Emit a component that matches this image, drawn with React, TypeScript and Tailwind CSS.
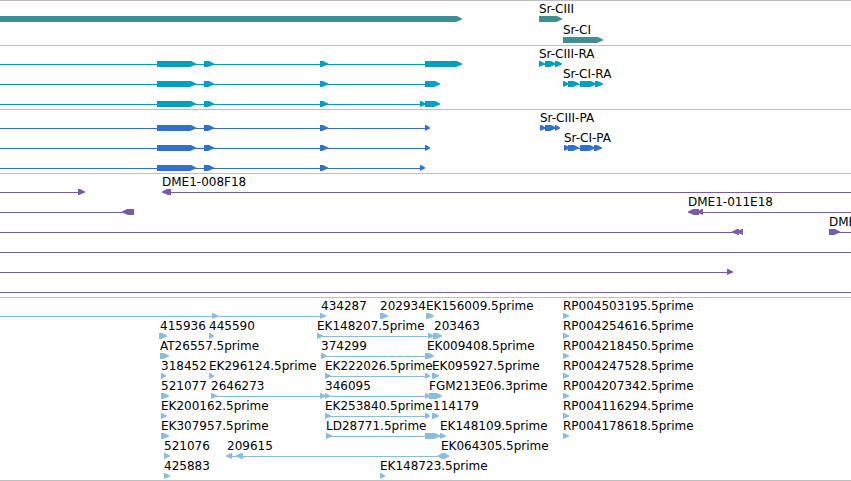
type Dir = 'r' | 'l' | 'both';
type Box = [start: number, end: number, dir?: Dir];
type Label = [x: number, text: string];
type Span = [start: number, end: number];

interface Row {
  labels?: Label[];
  lines?: Span[];
  boxes?: Box[];
}

interface Track {
  name: string;
  color: string;
  spacing: string;
  rows: Row[];
}

// Lines that run past the right edge of the view end here.
const OPEN_END = 4000;

const exons: Box[] = [[157, 196], [204, 214], [320, 328]];

const tracks: Track[] = [
  {
    name: 'Genes',
    color: 'text-[#408d94]',
    spacing: 'gap-px pb-0.5',
    rows: [
      { labels: [[538, 'Sr-CIII']], boxes: [[-10, 462], [539, 562]] },
      { labels: [[562, 'Sr-CI']], boxes: [[563, 603]] },
    ],
  },
  {
    name: 'Transcripts',
    color: 'text-[#009fbf]',
    spacing: 'pb-0.5',
    rows: [
      {
        labels: [[538, 'Sr-CIII-RA']],
        lines: [[0, 460], [539, 561]],
        boxes: [...exons, [425, 462], [539, 545], [545, 556], [555, 562]],
      },
      {
        labels: [[562, 'Sr-CI-RA']],
        lines: [[0, 438], [563, 602]],
        boxes: [...exons, [425, 440], [563, 569], [568, 579], [580, 596], [595, 603]],
      },
      { lines: [[0, 438]], boxes: [...exons, [420, 426], [425, 440]] },
    ],
  },
  {
    name: 'Proteins',
    color: 'text-[#336fcf]',
    spacing: 'pb-0.5',
    rows: [
      {
        labels: [[539, 'Sr-CIII-PA']],
        lines: [[0, 429], [540, 559]],
        boxes: [...exons, [425, 430], [540, 546], [545, 556], [555, 560]],
      },
      {
        labels: [[563, 'Sr-CI-PA']],
        lines: [[0, 429], [564, 600]],
        boxes: [...exons, [425, 430], [564, 570], [568, 579], [580, 595], [594, 602]],
      },
      { lines: [[0, 424]], boxes: [...exons, [420, 425]] },
    ],
  },
  {
    name: 'Clones',
    color: 'text-[#775ba9]',
    spacing: 'pb-0.5',
    rows: [
      {
        labels: [[161, 'DME1-008F18']],
        lines: [[0, 84], [163, OPEN_END]],
        boxes: [[78, 85], [162, 171, 'l']],
      },
      {
        labels: [[687, 'DME1-011E18']],
        lines: [[0, 125], [690, OPEN_END]],
        boxes: [[122, 134, 'l'], [688, 699, 'l'], [697, 703, 'l']],
      },
      {
        labels: [[828, 'DME']],
        lines: [[0, 740], [830, OPEN_END]],
        boxes: [[732, 739, 'l'], [737, 743, 'l'], [829, 840]],
      },
      { lines: [[0, OPEN_END]] },
      { lines: [[0, 732]], boxes: [[727, 733]] },
      { lines: [[0, OPEN_END]] },
    ],
  },
  {
    name: 'ESTs',
    color: 'text-[#89bddf]',
    spacing: 'pb-px',
    rows: [
      {
        labels: [[320, '434287'], [379, '202934'], [425, 'EK156009.5prime'], [562, 'RP004503195.5prime']],
        lines: [[0, 325]],
        boxes: [[212, 218], [320, 326], [380, 388], [426, 434], [563, 569]],
      },
      {
        labels: [[159, '415936'], [208, '445590'], [316, 'EK148207.5prime'], [433, '203463'], [562, 'RP004254616.5prime']],
        lines: [[317, 440]],
        boxes: [[159, 167], [209, 214], [317, 323], [428, 434], [433, 442], [563, 569]],
      },
      {
        labels: [[159, 'AT26557.5prime'], [320, '374299'], [426, 'EK009408.5prime'], [562, 'RP004218450.5prime']],
        lines: [[321, 432]],
        boxes: [[160, 169], [321, 327], [425, 434], [563, 569]],
      },
      {
        labels: [[160, '318452'], [208, 'EK296124.5prime'], [324, 'EK222026.5prime'], [431, 'EK095927.5prime'], [562, 'RP004247528.5prime']],
        lines: [[325, 429]],
        boxes: [[161, 166], [209, 214], [325, 331], [425, 430], [432, 439], [563, 569]],
      },
      {
        labels: [[160, '521077'], [210, '2646273'], [324, '346095'], [428, 'FGM213E06.3prime'], [562, 'RP004207342.5prime']],
        lines: [[211, 440]],
        boxes: [[161, 169], [211, 217], [320, 326], [325, 330], [425, 430], [429, 442], [563, 569]],
      },
      {
        labels: [[160, 'EK200162.5prime'], [324, 'EK253840.5prime'], [432, '114179'], [562, 'RP004116294.5prime']],
        lines: [[325, 429]],
        boxes: [[161, 167], [325, 331], [425, 430], [432, 439], [563, 569]],
      },
      {
        labels: [[160, 'EK307957.5prime'], [325, 'LD28771.5prime'], [439, 'EK148109.5prime'], [562, 'RP004178618.5prime']],
        lines: [[326, 444]],
        boxes: [[161, 169], [326, 332], [425, 440], [440, 446], [563, 569]],
      },
      {
        labels: [[163, '521076'], [226, '209615'], [440, 'EK064305.5prime']],
        lines: [[228, 449]],
        boxes: [[164, 170], [226, 232, 'l'], [236, 243, 'l'], [437, 450, 'both']],
      },
      {
        labels: [[163, '425883'], [379, 'EK148723.5prime']],
        boxes: [[164, 170], [380, 385]],
      },
    ],
  },
];

// A bar six pixels tall with a pointed end on the side it reads towards.
function outline([a, b, dir = 'r']: Box): string {
  const tip = Math.min(6, b - a);
  if (dir === 'both') {
    return `${a},17 ${a + 5},14 ${b - 5},14 ${b},17 ${b - 5},20 ${a + 5},20`;
  }
  return dir === 'r'
    ? `${a},14 ${b - tip + 1},14 ${b},16.5 ${b},17.5 ${b - tip},20 ${a},20`
    : `${b},14 ${a + tip - 1},14 ${a},16.5 ${a},17.5 ${a + tip},20 ${b},20`;
}

function FeatureRow({ labels = [], lines = [], boxes = [] }: Row) {
  return (
    <div className="relative h-5">
      <svg className="absolute inset-0 h-full w-full" fill="currentColor" aria-hidden="true">
        {lines.map(([a, b]) => (
          <rect key={a} x={a} y={17} width={b - a} height={1} />
        ))}
        {boxes.map((box) => (
          <polygon key={box[0]} points={outline(box)} />
        ))}
      </svg>
      {labels.map(([x, text]) => (
        <span
          key={text}
          className="absolute top-0 pl-px text-xs leading-[14px] whitespace-nowrap text-black"
          style={{ left: x }}
        >
          {text}
        </span>
      ))}
    </div>
  );
}

export default function App() {
  return (
    <main className="overflow-hidden border-b border-[#bebebe] bg-white font-['DejaVu_Sans',sans-serif]">
      {tracks.map((track) => (
        <section
          key={track.name}
          aria-label={track.name}
          className={`flex flex-col border-t border-[#bebebe] pt-px ${track.spacing} ${track.color}`}
        >
          {track.rows.map((row, i) => (
            <FeatureRow key={i} {...row} />
          ))}
        </section>
      ))}
    </main>
  );
}
